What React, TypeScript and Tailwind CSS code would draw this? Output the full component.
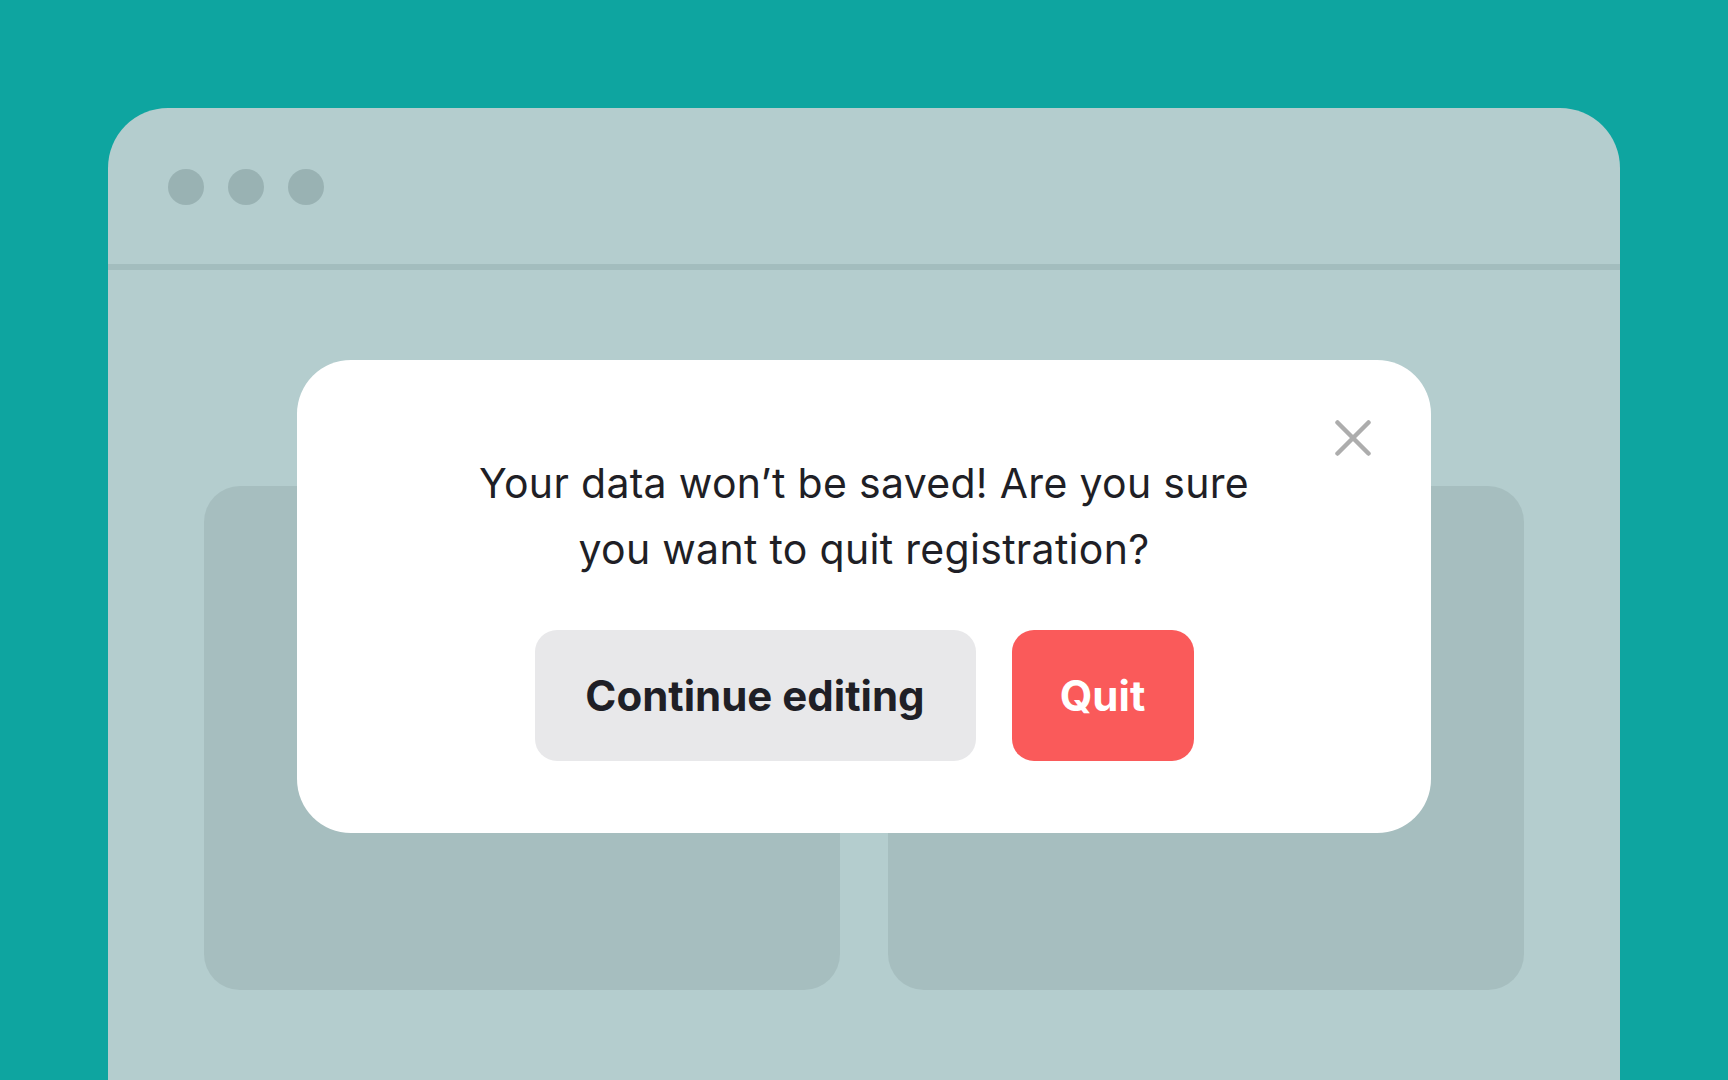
import React from "react";

export default function App() {
  return (
    <div
      className="w-[1728px] h-[1080px] overflow-hidden bg-[#0ea5a0] pt-[108px] px-[108px]"
      style={{ fontFamily: "Inter, 'Noto Sans', sans-serif" }}
    >
      <div className="relative h-[1100px] w-[1512px] rounded-t-[60px] bg-[#b4cdce] flex flex-col">
        <div className="h-[156px] flex items-center gap-6 pl-[60px] pt-[2px]">
          <div className="w-9 h-9 rounded-full bg-[#99b2b3]" />
          <div className="w-9 h-9 rounded-full bg-[#99b2b3]" />
          <div className="w-9 h-9 rounded-full bg-[#99b2b3]" />
        </div>
        <div className="h-[6px] bg-[#a3bdbe]" />
        <div className="pt-[216px] px-[96px] grid grid-cols-2 gap-[48px]">
          <div className="h-[504px] rounded-[36px] bg-[#a6bebf]" />
          <div className="h-[504px] rounded-[36px] bg-[#a6bebf]" />
        </div>

        <div className="absolute left-[189px] top-[252px] w-[1134px] h-[473px] rounded-[54px] bg-white flex flex-col items-center pt-[90px]">
          <button className="absolute right-[60px] top-[60px] w-9 h-9" aria-label="Close">
            <svg viewBox="0 0 36 36" width="36" height="36" fill="none" stroke="#adadad" strokeWidth="4.5" strokeLinecap="round">
              <path d="M2.5 2.5L33.5 33.5M33.5 2.5L2.5 33.5" />
            </svg>
          </button>
          <p className="text-center text-[41px] leading-[66px] text-[#1f1f26] tracking-[0.3px]">
            Your data won’t be saved! Are you sure
            <br />
            you want to quit registration?
          </p>
          <div className="mt-[48px] flex gap-[36px]">
            <button className="h-[131px] w-[441px] rounded-[22px] bg-[#e8e8ea] text-[#1f1f26] text-[42px] font-bold flex items-center justify-center">
              Continue editing
            </button>
            <button className="h-[131px] w-[182px] rounded-[22px] bg-[#fa5a5a] text-white text-[42px] font-bold flex items-center justify-center">
              Quit
            </button>
          </div>
        </div>
      </div>
    </div>
  );
}
